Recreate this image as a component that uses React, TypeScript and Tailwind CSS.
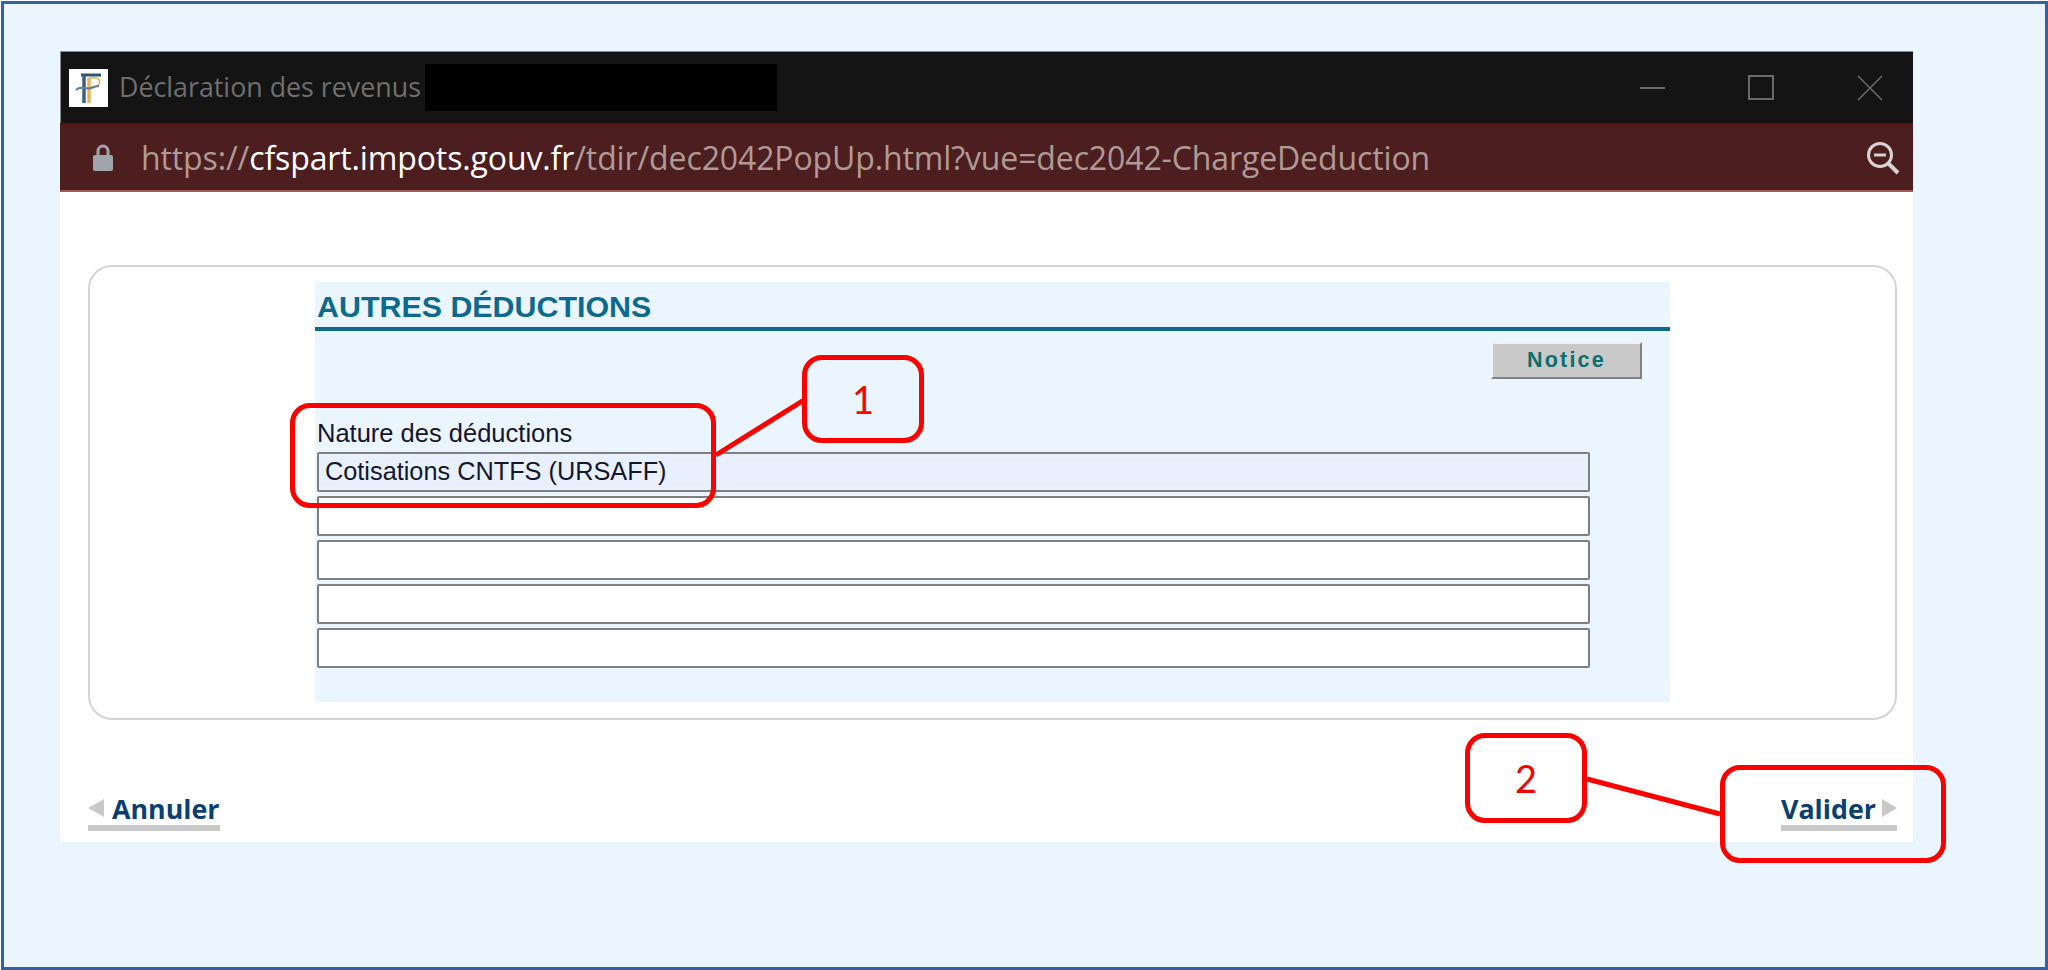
import type { ReactNode } from "react";

const url = { start: "https://", host: "cfspart.impots.gouv.fr", rest: "/tdir/dec2042PopUp.html?vue=dec2042-ChargeDeduction" };

function Logo() {
  return (
    <div className="h-[38px] w-[39px] shrink-0 bg-white">
      <svg width="39" height="38" viewBox="0 0 39 38" fill="none">
        <path d="M20 9v25" stroke="#e6b45c" strokeWidth="3.5" />
        <path d="M20 9c10-1 12 2 10 6-1 2-4 3-8 3" stroke="#e6b45c" strokeWidth="1.5" />
        <path d="M12 6h20" stroke="#2f5573" strokeWidth="3" />
        <path d="M15 6v28" stroke="#3a607d" strokeWidth="3.5" />
        <path d="M7 21c5-5 10 0 15-2s6-2 8-2" stroke="#5b7f99" strokeWidth="2" />
      </svg>
    </div>
  );
}

function LockIcon() {
  return (
    <svg className="shrink-0" width="20" height="27" viewBox="0 0 20 27" fill="none">
      <path d="M5 12V7a5 5 0 0 1 10 0v5" stroke="#a0a4ab" strokeWidth="3" />
      <rect x="0" y="11" width="20" height="16" rx="2" fill="#a0a4ab" />
    </svg>
  );
}

function Field({ value, active }: { value?: string; active?: boolean }) {
  return (
    <div
      className={`flex h-10 w-[1273px] items-center rounded-[2px] border-2 border-[#7f7f7f] pl-[6px] text-[25.3px] text-[#16162a] ${active ? "bg-[#e8f0fe]" : "bg-white"}`}
    >
      {value}
    </div>
  );
}

function Callout({ className, children }: { className: string; children?: ReactNode }) {
  return (
    <div
      className={`absolute flex items-center justify-center rounded-[20px] border-[5px] border-[#ff0000] font-['Lato',sans-serif] text-[38px] text-[#ff0000] ${className}`}
    >
      {children}
    </div>
  );
}

export default function App() {
  return (
    <div className="relative h-[970px] w-[2048px] overflow-hidden bg-white pl-px pt-px font-['Liberation_Sans',sans-serif]">
      <div className="h-[969px] w-[2047px] border-[3px] border-[#3a5f9e] bg-[#eaf5ff] pl-[56px] pt-[47px]">
        <div className="flex h-[791px] w-[1853px] flex-col bg-white">
          <div className="flex h-[72px] shrink-0 items-center border-l border-t border-[#8a8a8a] bg-[#141414] pl-[8px]">
            <Logo />
            <span className="ml-[11px] font-['Open_Sans',sans-serif] text-[26.8px] text-[#6f6f6f]">Déclaration des revenus</span>
            <div className="ml-[4px] h-[47px] w-[352px] bg-black" />
            <div className="ml-auto flex items-center">
              <div className="h-[2px] w-[25px] bg-[#6b6b6b]" />
              <div className="ml-[83px] h-[25px] w-[26px] border-2 border-[#6b6b6b]" />
              <svg className="ml-[83px] mr-[30px]" width="26" height="26" viewBox="0 0 26 26" stroke="#6b6b6b" strokeWidth="1.5">
                <path d="M1 1l24 24M25 1L1 25" />
              </svg>
            </div>
          </div>
          <div className="flex h-[69px] shrink-0 items-center border-y-2 border-t-[#5a1010] border-b-[#a05a5a] bg-[#4c1e1f] pl-[33px]">
            <LockIcon />
            <span className="ml-[28px] font-['Open_Sans',sans-serif] text-[32px] tracking-[-0.12px] text-[#b09a95]">
              {url.start}
              <span className="text-white">{url.host}</span>
              {url.rest}
            </span>
            <svg className="ml-auto mr-[13px]" width="34" height="34" viewBox="0 0 34 34" fill="none" stroke="#d8d4d2" strokeWidth="3">
              <circle cx="14" cy="14" r="11.5" />
              <path d="M8 14h12" />
              <path d="M22.5 22.5L32 32" strokeWidth="4" />
            </svg>
          </div>
          <div className="ml-[28px] mr-[16px] mt-[73px] h-[455px] rounded-[24px] border-2 border-[#d4d4d4] pl-[225px] pt-[15px]">
            <div className="flex h-[420px] w-[1355px] flex-col bg-[#eaf5ff]">
              <div className="flex h-[49px] items-end border-b-[4px] border-[#0e6a8c] pb-[6px] pl-[2px] text-[30.4px] font-bold leading-none text-[#0e6a8c]">
                AUTRES DÉDUCTIONS
              </div>
              <div className="mr-[28px] mt-[11px] flex h-[37px] w-[151px] items-center justify-center self-end border-2 border-[#f0f0f0] border-b-[#808080] border-r-[#808080] bg-[#c9c9c9] text-[21.5px] font-bold tracking-[2.2px] text-[#0d6e6e]">
                Notice
              </div>
              <div className="ml-[2px] mt-[39px] text-[25.5px] leading-[30px] text-[#16162a]">Nature des déductions</div>
              <div className="ml-[2px] mt-[4px] flex flex-col gap-1">
                <Field value="Cotisations CNTFS (URSAFF)" active />
                <Field />
                <Field />
                <Field />
                <Field />
              </div>
            </div>
          </div>
          <div className="ml-[28px] mr-[16px] mt-[73px] flex justify-between font-['Open_Sans',sans-serif] text-[26.8px] font-bold leading-[30px] text-[#0b3f73]">
            <div className="flex w-[132px] items-center border-b-[6px] border-[#c9c9c9] pb-[2px]">
              <span className="mr-[8px] h-0 w-0 border-y-[9px] border-r-[16px] border-y-transparent border-r-[#c9c9c9]" />
              <span className="translate-y-px">Annuler</span>
            </div>
            <div className="flex w-[116px] items-center border-b-[6px] border-[#c9c9c9] pb-[2px]">
              <span className="translate-y-px">Valider</span>
              <span className="ml-auto h-0 w-0 border-y-[9px] border-l-[15px] border-y-transparent border-l-[#c9c9c9]" />
            </div>
          </div>
        </div>
      </div>

      <Callout className="left-[290px] top-[403px] h-[105px] w-[426px]" />
      <Callout className="left-[802px] top-[355px] h-[88px] w-[122px]">1</Callout>
      <Callout className="left-[1465px] top-[733px] h-[90px] w-[122px]">2</Callout>
      <Callout className="left-[1720px] top-[765px] h-[98px] w-[226px]" />
      <svg className="absolute left-0 top-0" width="2048" height="970" fill="none" stroke="#ff0000" strokeWidth="5">
        <path d="M716 455L804 400" />
        <path d="M1587 779L1720 814" />
      </svg>
    </div>
  );
}
